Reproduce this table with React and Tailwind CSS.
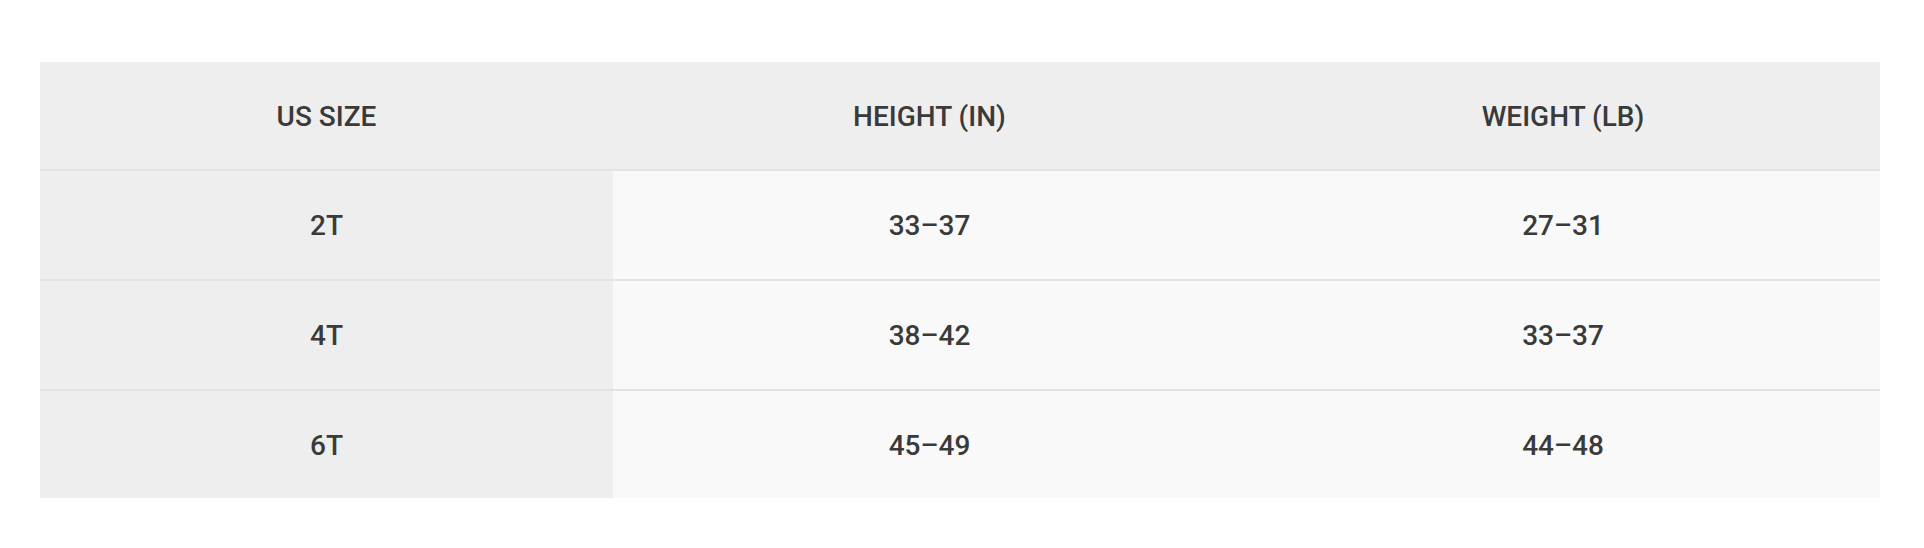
import React from 'react';

const rows = [
  { size: '2T', height: '33–37', weight: '27–31' },
  { size: '4T', height: '38–42', weight: '33–37' },
  { size: '6T', height: '45–49', weight: '44–48' },
];

export default function App() {
  return (
    <div className="min-h-[548px] bg-white pl-[40px] pr-[44px] pt-[62px] font-['Roboto',sans-serif] text-[#3a3a3a]">
      <table className="w-full table-fixed border-collapse">
        <colgroup>
          <col className="w-[573px]" />
          <col className="w-[633px]" />
          <col />
        </colgroup>
        <thead>
          <tr className="h-[108px] bg-[#eeeeee] border-b-2 border-[#e3e3e3]">
            <th className="pt-[2px] text-[28px] font-medium">US SIZE</th>
            <th className="pt-[2px] text-[28px] font-medium">HEIGHT (IN)</th>
            <th className="pt-[2px] text-[28px] font-medium">WEIGHT (LB)</th>
          </tr>
        </thead>
        <tbody>
          {rows.map((r, i) => (
            <tr
              key={r.size}
              className={i < rows.length - 1 ? 'h-[110px] border-b-2 border-[#e3e3e3]' : 'h-[108px]'}
            >
              <td className="bg-[#eeeeee] pt-[2px] text-center text-[28px] font-medium">{r.size}</td>
              <td className="bg-[#f8f9f8] pt-[2px] text-center text-[28px] font-medium">{r.height}</td>
              <td className="bg-[#f8f9f8] pt-[2px] text-center text-[28px] font-medium">{r.weight}</td>
            </tr>
          ))}
        </tbody>
      </table>
    </div>
  );
}
